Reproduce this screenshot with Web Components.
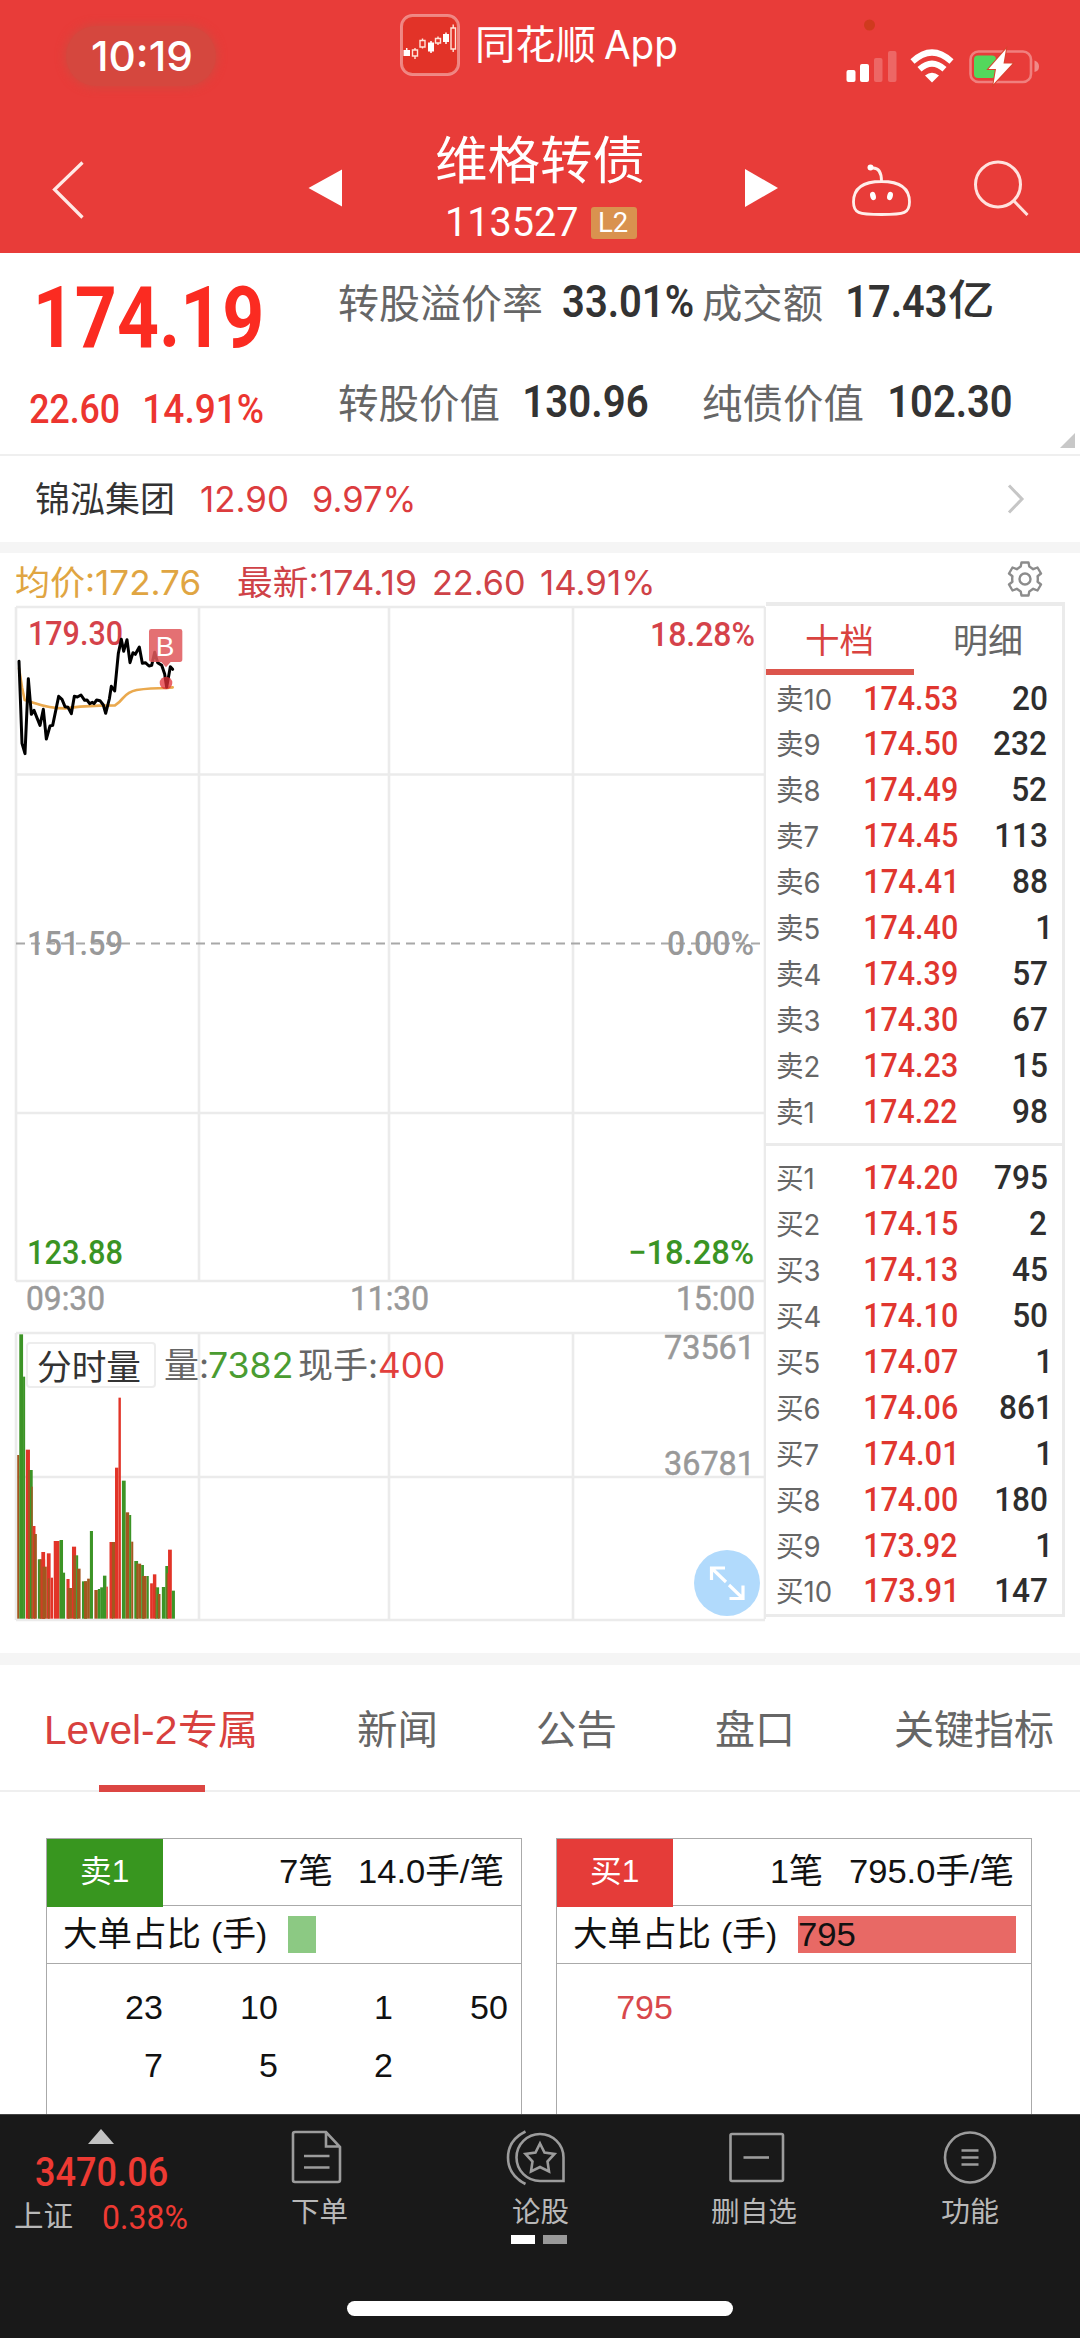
<!DOCTYPE html>
<html lang="zh-CN">
<head>
<meta charset="utf-8">
<title>维格转债 113527</title>
<style>
html,body{margin:0;padding:0;background:#fff}
body{width:1080px;height:2338px;overflow:hidden;font-family:"Liberation Sans","Noto Sans CJK SC",sans-serif}
</style>
</head>
<body>
<quote-app></quote-app>
<script>
const ctx = document.createElement('canvas').getContext('2d');
const FONTS = `
  .din{font-family:Roboto,"Noto Sans CJK SC",sans-serif;font-weight:500}
  .sf{font-family:Inter,"Noto Sans CJK SC",sans-serif}
  .hv{font-family:"Liberation Sans","Noto Sans CJK SC",sans-serif}
  *{box-sizing:border-box}`;

/* Text whose inked width is fixed (w) or scaled by a factor (sx). */
class FitText extends HTMLElement {
  connectedCallback() {
    if (this.shadowRoot) return;
    const root = this.attachShadow({mode: 'open'});
    root.innerHTML = `<style>:host{display:block;flex:none;white-space:pre;line-height:1.2}
      span{display:inline-block;transform-origin:0 50%;vertical-align:top}</style><span><slot></slot></span>`;
    const cs = getComputedStyle(this);
    ctx.font = `${cs.fontWeight} ${cs.fontSize} ${cs.fontFamily}`;
    const m = ctx.measureText(this.textContent);
    const ink = m.actualBoundingBoxLeft + m.actualBoundingBoxRight;
    const w = this.hasAttribute('w') ? +this.getAttribute('w') : ink * +(this.getAttribute('sx') || 1);
    const s = w / ink;
    this.style.width = w + 'px';
    root.querySelector('span').style.transform =
      `translateX(${m.actualBoundingBoxLeft * s}px) scaleX(${s})`;
  }
}
customElements.define('fit-text', FitText);

const define = (name, html) => {
  const tpl = document.createElement('template');
  tpl.innerHTML = html;
  customElements.define(name, class extends HTMLElement {
    connectedCallback() {
      if (!this.shadowRoot) this.attachShadow({mode: 'open'}).append(tpl.content.cloneNode(true));
    }
  });
};

/* ---------- status bar ---------- */
define('status-bar', `<style>${FONTS}
:host{display:flex;align-items:flex-start;height:104px;color:#fff}
.pill{margin:26px 0 0 66px;width:150px;height:60px;border-radius:30px;background:#d5473e;box-shadow:0 0 8px 2px #d5473e;display:flex;align-items:center;padding:2px 0 0 26px}
.app{margin:14px 0 0 184px}
</style>
<div class="pill"><fit-text class="sf" w="99" style="font-size:41px;font-weight:500">10:19</fit-text></div>
<svg class="app" width="60" height="62" viewBox="0 0 60 62"><rect x="1.5" y="1.5" width="57" height="59" rx="11" fill="#e23328" stroke="#fff" stroke-opacity=".4" stroke-width="3"/>
<path d="M3.500 36h6.500v6H3.500zM28 28.500h6v9H28zM43 20h6v8H43z" fill="#fff"/><path d="M6.700 34v2M31 27v2M31 37v2M46 18.500v2M46 28v2" stroke="#fff" stroke-width="1.500"/>
<g fill="none" stroke="#ffe3d8" stroke-width="1.400"><path d="M12.500 36h5v6h-5zM15 34v2M15 42v3M20 26.500h5v6.500h-5zM22.500 24.500v2M22.500 33v1.500M35.500 24.500h5v4.500h-5zM38 22.500v2M38 29v2M51 14h4.500v21h-4.500zM53.200 10.500v3.500M53.200 35v3"/></g></svg>
<fit-text class="sf" w="117" style="font-size:40px;margin:21px 0 0 18px">同花顺</fit-text>
<fit-text class="sf" w="72" style="font-size:39px;margin:22px 0 0 9px">App</fit-text>
<svg style="margin:18px 0 0 169px" width="196" height="70" viewBox="845 18 196 70">
<circle cx="869.500" cy="25" r="5.500" fill="#cf3a1e"/>
<g fill="#fff"><rect x="846.500" y="70" width="9" height="12" rx="2"/><rect x="860" y="64" width="9" height="18" rx="2"/><g opacity=".22"><rect x="874" y="58" width="8.500" height="24" rx="2"/><rect x="888" y="51" width="8.500" height="31" rx="2"/></g></g>
<g fill="none" stroke="#fff" stroke-width="6"><path d="M912.500 61.500Q932 43.500 951.500 61.500"/><path d="M919.500 69.300Q932 58 944.500 69.300"/></g><path d="M925 75.500Q932 70 939 75.500L932 82.500Z" fill="#fff"/>
<rect x="970.500" y="51.500" width="60.500" height="30.500" rx="8" fill="none" stroke="#fff" stroke-opacity=".35" stroke-width="2.600"/>
<path d="M1034.500 60.500Q1039 62 1039 66.500T1034.500 72Z" fill="#fff" opacity=".4"/>
<rect x="974" y="55.500" width="22" height="22.500" rx="4" fill="#54d75c"/>
<path d="M1006 49L988.500 69H996L993.500 84L1012.500 63.500H1003.500Z" fill="#fff" stroke="#d9432f" stroke-width="2" paint-order="stroke"/>
</svg>`);

/* ---------- navigation bar ---------- */
define('nav-bar', `<style>${FONTS}
:host{display:flex;align-items:flex-start;height:149px;color:#fff}
.mid{display:flex;flex-direction:column;margin-left:93px;width:210px}
.code{display:flex;align-items:center;height:34px;margin:15px 0 0 12px}
.l2{width:46px;height:32px;background:#d9924f;border-radius:3px;margin-left:14px;display:flex;align-items:center;justify-content:center}
</style>
<svg style="margin:50px 0 0 50px" width="40" height="70" viewBox="50 154 40 70"><path d="M82.500 162.500L54.500 189.500L82.500 217.500" fill="none" stroke="#ffe9e6" stroke-width="3.200"/></svg>
<svg style="margin:60px 0 0 215px" width="38" height="48" viewBox="305 164 38 48"><path d="M308.500 188L342 169.500V206.500Z" fill="#fff"/></svg>
<div class="mid"><fit-text class="sf" w="207" style="font-size:51px;margin-top:26px">维格转债</fit-text>
<div class="code"><fit-text class="din" w="129" style="font-size:40px;font-weight:400">113527</fit-text><div class="l2"><fit-text class="din" w="28" style="font-size:27px;font-weight:400">L2</fit-text></div></div></div>
<svg style="margin:60px 0 0 96px" width="38" height="48" viewBox="742 164 38 48"><path d="M778 188L745 169V207Z" fill="#fff"/></svg>
<svg style="margin:54px 0 0 70px" width="64" height="62" viewBox="850 158 64 62" fill="none" stroke="#ffeeea" stroke-width="2.800"><path d="M873 168C879 168 881.500 172 881.500 181M853.500 202C853.500 187 864 181.500 881.500 181.500S909.500 187 909.500 202C909.500 213 905 214.500 881.500 214.500S853.500 213 853.500 202Z"/><circle cx="870.500" cy="167.500" r="3" fill="#fff" stroke="none"/><g fill="#fff" stroke="none"><ellipse cx="873" cy="196" rx="2.800" ry="4.200" transform="rotate(-15 873 196)"/><ellipse cx="890" cy="196" rx="2.800" ry="4.200" transform="rotate(15 890 196)"/></g></svg>
<svg style="margin:54px 0 0 56px" width="64" height="64" viewBox="970 158 64 64" fill="none" stroke="#ffe2de" stroke-width="3"><circle cx="998" cy="184.500" r="22.500"/><path d="M1013 200L1027.500 215"/></svg>`);

/* ---------- quote summary ---------- */
define('quote-summary', `<style>${FONTS}
:host{display:flex;height:203px;border-bottom:2px solid #efefef;color:#333}
.l{width:339px;color:#ec352f;padding-left:30px}
.p{display:flex;align-items:center;height:72px;margin-top:29px;padding-left:8px;color:#fb2b21}
.c,.kv{display:flex;align-items:center}
.c{height:50px;margin-top:31px}
.r{width:741px;padding-top:21px;position:relative}
.kv{height:60px}.kv+.kv{margin-top:40px}
.k{font-size:40px;color:#666}
.v{font-size:45px;font-weight:600;margin-bottom:5px}
.tri{position:absolute;right:5px;bottom:6px}
</style>
<div class="l"><div class="p"><fit-text class="din" w="223" style="font-size:85px;font-weight:700">174.19</fit-text></div>
<div class="c"><fit-text class="din" w="89" style="font-size:41px">22.60</fit-text><fit-text class="din" w="118" style="font-size:41px;margin-left:26px">14.91%</fit-text></div></div>
<div class="r"><div class="kv"><fit-text class="k sf" w="202">转股溢价率</fit-text><fit-text class="v din" w="130" style="margin-left:22px;font-weight:600">33.01%</fit-text><fit-text class="k sf" w="119" style="margin-left:10px">成交额</fit-text><fit-text class="v din" w="98" style="margin-left:26px;font-weight:600">17.43</fit-text><fit-text class="v din" w="43" style="margin-left:3px;font-weight:500;font-size:42px">亿</fit-text></div>
<div class="kv"><fit-text class="k sf" w="160">转股价值</fit-text><fit-text class="v din" w="123" style="margin-left:26px;font-weight:600">130.96</fit-text><fit-text class="k sf" w="160" style="margin-left:55px">纯债价值</fit-text><fit-text class="v din" w="121" style="margin-left:27px;font-weight:600">102.30</fit-text></div>
<svg class="tri" width="15" height="15"><path d="M15 0V15H0Z" fill="#c8c8c8"/></svg></div>`);

define('stock-link', `<style>${FONTS}
:host{display:flex;align-items:center;height:86px;padding-left:36px;font-size:35px;color:#333}
svg{margin-left:auto;margin-right:54px}
</style><fit-text class="sf" w="137">锦泓集团</fit-text><fit-text class="sf" w="86" style="margin-left:28px;color:#dc3c3e">12.90</fit-text><fit-text class="sf" w="99" style="margin-left:27px;color:#dc3c3e">9.97%</fit-text>
<svg width="20" height="32"><path d="M3 2.500L16 16L3 29.500" fill="none" stroke="#c6c6c6" stroke-width="3"/></svg>`);

define('chart-legend', `<style>${FONTS}
:host{display:flex;align-items:center;height:50px;padding:11px 0 0 16px;font-size:34px;color:#cf4247}
svg{margin-left:auto;margin-right:36px;margin-bottom:9px}
</style><fit-text class="sf" w="184" style="color:#e0a542">均价:172.76</fit-text><fit-text class="sf" w="178" style="margin-left:38px">最新:174.19</fit-text><fit-text class="sf" w="90" style="margin-left:18px">22.60</fit-text><fit-text class="sf" w="111" style="margin-left:17px">14.91%</fit-text>
<svg width="38" height="38" viewBox="-19 -19 38 38" fill="none" stroke="#8c8c8c" stroke-width="2.400" stroke-linejoin="round"><circle r="5.500"/><path d="M-3.500-16.500H3.500L4.300-12.500Q6-11.500 8.200-9.800L12.500-11.500L16-5.500L12.600-2.700Q13 0 12.600 2.700L16 5.500L12.500 11.500L8.200 9.800Q6 11.500 4.300 12.500L3.500 16.500H-3.500L-4.300 12.500Q-6 11.500-8.200 9.800L-12.500 11.500L-16 5.500L-12.600 2.700Q-13 0-12.600-2.700L-16-5.500L-12.500-11.500L-8.200-9.800Q-6-11.500-4.300-12.500Z"/></svg>`);

/* ---------- intraday chart ---------- */
const R = '#e23428', G = '#3c9426', B = '#a3571f';
const vol = [[50,6,705,B],[56,11,343,G],[67,6,470,G],[75,12,689,R],[81,6,750,B],[87,8,750,G],[91,4,800,B],[95,8,918,R],[98,9,942,B],[110,10,1018,G],[115,16,1018,B],[120,11,996,R],[123,13,1040,B],[136,11,1000,R],[147,7,1073,R],[139,5,1075,B],[156,17,963,R],[173,10,960,G],[183,6,1058,G],[193,9,1077,R],[196,13,1104,B],[209,12,980,R],[213,8,1006,B],[221,6,1006,G],[224,10,1046,B],[238,15,1084,G],[244,9,1084,B],[253,8,1076,B],[261,9,933,G],[274,10,1110,B],[284,7,1107,G],[291,8,1102,G],[299,10,1067,G],[309,4,1100,R],[318,10,966,R],[325,9,966,B],[334,10,743,R],[344,7,533,R],[354,11,782,G],[365,10,877,B],[375,6,885,G],[381,6,965,B],[390,11,1023,G],[396,5,1031,B],[401,9,1031,B],[410,8,1035,G],[413,7,1068,B],[418,8,1068,B],[426,6,1068,G],[436,8,1090,R],[444,10,1063,R],[450,5,1102,B],[454,8,1102,G],[458,8,1122,B],[470,10,1101,G],[480,8,1038,G],[484,5,1060,B],[488,11,989,R],[499,9,1112,G]];
const bars = vol.map(([x, w, y, c]) => `<rect x="${x}" y="${y}" width="${w}" height="${1196 - y}" fill="${c}"/>`).join('');
define('trend-chart', `<style>${FONTS}
:host{display:block;position:relative;width:766px;height:1050px;flex:none}
svg{display:block}
.din{font-size:34px}
.tools{position:absolute;left:26px;top:739px;height:46px;display:flex;align-items:center;font-size:35px}
.chip{width:130px;height:46px;background:#fff;border:2px solid #ededed;border-radius:4px;display:flex;align-items:center;padding:3px 0 0 10px;color:#333}
</style>
<svg width="766" height="1050" viewBox="0 603 766 1050">
<g fill="none" stroke="#ebebeb" stroke-width="2.600"><path d="M16 607H765M16 774.500H765M16 1113H765M16 1281H765M16 607V1281M199 607V1281M389 607V1281M573 607V1281M765 607V1619"/>
<path d="M16 1333H765M16 1477H765M16 1620H765M16 1333V1620M199 1333V1620M389 1333V1620M573 1333V1620"/></g>
<path d="M16 943.500H765" stroke="#a8a8a8" stroke-width="1.800" stroke-dasharray="9 6"/>
<g class="din" fill="#d5424a">
<text x="28" y="645" textLength="95" lengthAdjust="spacingAndGlyphs">179.30</text>
<text x="650" y="645.500" textLength="105" lengthAdjust="spacingAndGlyphs">18.28%</text></g>
<g class="din" fill="#999">
<text x="27" y="955" textLength="96" lengthAdjust="spacingAndGlyphs">151.59</text>
<text x="667" y="955" textLength="87" lengthAdjust="spacingAndGlyphs">0.00%</text>
<g style="font-weight:400" stroke="#999" stroke-width=".5"><text x="26" y="1310" textLength="79" lengthAdjust="spacingAndGlyphs">09:30</text>
<text x="350" y="1310" textLength="79" lengthAdjust="spacingAndGlyphs">11:30</text>
<text x="676" y="1310" textLength="79" lengthAdjust="spacingAndGlyphs">15:00</text>
<text x="664" y="1359" textLength="91" lengthAdjust="spacingAndGlyphs">73561</text>
<text x="664" y="1475" textLength="91" lengthAdjust="spacingAndGlyphs">36781</text></g></g>
<g class="din" fill="#3a9424"><text x="27" y="1264" textLength="96" lengthAdjust="spacingAndGlyphs">123.88</text>
<text x="628" y="1264" textLength="126" lengthAdjust="spacingAndGlyphs">−18.28%</text></g>
<g transform="translate(0 600) scale(.33333)" fill="none" stroke-linejoin="round" stroke-linecap="round">
<path d="M57 205L66 262L74 300L100 308Q150 325 195 325L240 320L300 317L345 316Q358 308 368 295Q385 275 410 270Q450 264 500 264L518 262" stroke="#eaa94e" stroke-width="8"/>
<path d="M57 184L66 430L75 461L85 236L94 343L102 331L120 376L130 328L139 417L150 378L158 376L176 289L186 298L195 320L204 322L214 341L223 289L232 291L243 285L254 301L261 300L269 311L277 307L282 311L290 300L300 302L310 315L317 340L328 297L334 259L344 273L355 160L364 118L371 154L381 119L390 188L399 158L406 163L418 141L427 190L436 188L447 198L455 196L464 157L473 188L485 196L494 222L500 262L511 200L518 208" stroke="#000" stroke-width="9"/>
<g stroke="none"><circle cx="498" cy="249" r="19" fill="#e33037" opacity=".75"/><path d="M454 87H540Q547 87 547 94V178Q547 186 540 186H512L498 202L484 186H454Q447 186 447 178V94Q447 87 454 87Z" fill="#e0595c" opacity=".86"/></g></g>
<text x="165" y="655.500" text-anchor="middle" fill="#fff" font-family="Liberation Sans" font-size="28">B</text>
<g transform="translate(0 1220) scale(.34436 .33333)">${bars}</g>
<circle cx="727" cy="1583" r="33" fill="#b1dafc"/>
<path d="M711.500 1580V1568H725M712 1568.500L726 1582M729 1585L743 1598.500M729.500 1598.500H743V1585.500" fill="none" stroke="#fff" stroke-width="3.200"/>
</svg>
<div class="tools"><div class="chip"><fit-text class="sf" w="102">分时量</fit-text></div>
<fit-text class="sf" w="42" style="margin-left:9px;color:#666">量:</fit-text><fit-text class="sf" w="82" style="margin-left:2px;color:#4a9c31">7382</fit-text><fit-text class="sf" w="77" style="margin-left:8px;color:#666">现手:</fit-text><fit-text class="sf" w="63" style="margin-left:4px;color:#e23f3c">400</fit-text></div>`);

/* ---------- order book ---------- */
define('book-row', `<style>${FONTS}
:host{display:grid;grid-template-columns:88px 92px 1fr;height:45.900px;align-items:center;padding:0 15px 0 11px}
</style><slot></slot>`);
const asks = [['174.53',20],['174.50',232],['174.49',52],['174.45',113],['174.41',88],['174.40',1],['174.39',57],['174.30',67],['174.23',15],['174.22',98]];
const bids = [['174.20',795],['174.15',2],['174.13',45],['174.10',50],['174.07',1],['174.06',861],['174.01',1],['174.00',180],['173.92',1],['173.91',147]];
const row = (n, [p, q]) => `<book-row><fit-text class="sf n" sx=".95">${n}</fit-text><fit-text class="din p" w="${/1$/.test(p) ? 89 : 92}">${p}</fit-text><fit-text class="din q" sx=".93">${q}</fit-text></book-row>`;
define('order-book', `<style>${FONTS}
:host{display:block;width:299px;height:1015px;margin-top:-1px;border:3px solid #ebebeb;border-top-width:4px;border-left:0}
.tabs{display:flex;height:69px;font-size:34px;color:#666}
.tabs div{width:148px;display:flex;align-items:center;justify-content:center;padding-top:2px}
.tabs .on{color:#d9433f;border-bottom:6px solid #dc554c;padding:8px 2px 0 0}
.n{font-size:29px;color:#666;margin-top:4px}
.p{font-size:34px;color:#e0362f}
.q{font-size:34px;color:#2e2e2e;justify-self:end}
.sep{height:3px;background:#ebebeb;margin:9px 0 9px}
</style><div class="tabs"><div class="on"><fit-text class="sf" w="66">十档</fit-text></div><div><fit-text class="sf" w="66">明细</fit-text></div></div>
${asks.map((r, i) => row('卖' + (10 - i), r)).join('')}<div class="sep"></div>${bids.map((r, i) => row('买' + (i + 1), r)).join('')}`);

/* ---------- section tabs ---------- */
define('section-tabs', `<style>${FONTS}
:host{display:flex;align-items:stretch;height:127px;border-bottom:2px solid #efefef;padding-left:47px;font-size:40px;color:#666}
.t{display:flex;align-items:center;padding-top:4px}
.on{color:#d8403e;position:relative}
.on i{position:absolute;left:52px;bottom:-2px;width:106px;height:7px;background:#dc4643}
</style><div class="t on"><fit-text class="hv" w="129">Level-2</fit-text><fit-text class="hv" w="75" style="margin-left:4px">专属</fit-text><i></i></div>
<div class="t" style="margin-left:103px"><fit-text class="hv" w="77">新闻</fit-text></div>
<div class="t" style="margin-left:103px"><fit-text class="hv" w="77">公告</fit-text></div>
<div class="t" style="margin-left:101px"><fit-text class="hv" w="75">盘口</fit-text></div>
<div class="t" style="margin-left:104px"><fit-text class="hv" w="158">关键指标</fit-text></div>`);

/* ---------- level-2 queue card ---------- */
class QueueCard extends HTMLElement {
  connectedCallback() {
    if (this.shadowRoot) return;
    const a = n => this.getAttribute(n) || '';
    this.attachShadow({mode: 'open'}).innerHTML = `<style>${FONTS}
:host{display:block;width:476px;height:277px;border:1.500px solid #aaa;border-bottom:0;font-size:34px;color:#111}
.h,.b{display:flex;align-items:center;border-bottom:1.500px solid #aaa}
.h{height:67px;padding-right:18px}
.tag{width:116px;height:68px;margin-top:1px;background:${a('color')};color:#fff;font-size:31px;display:flex;align-items:center;justify-content:center;padding:0 2px 1px 0}
.cnt{margin-left:auto}.avg{margin-left:28px}
.h>fit-text{margin-bottom:1px}
.b{height:58px;padding-left:17px}
.bar{margin-left:22px;height:37px;background:${a('fill')};display:flex;align-items:center;padding-left:1px}
.g{display:grid;grid-template-columns:repeat(4,115px);grid-auto-rows:58px;padding-top:14px;justify-items:end;align-items:center}
</style><div class="h"><div class="tag"><fit-text class="hv" w="47">${a('tag')}</fit-text></div>
<fit-text class="hv cnt" w="${a('cw')}">${a('count')}</fit-text><fit-text class="hv avg" w="${a('aw')}">${a('avg')}</fit-text></div>
<div class="b"><fit-text class="hv" w="136">大单占比</fit-text><fit-text class="hv" w="53" style="margin-left:13px">(手)</fit-text><div class="bar" style="width:${a('bar')}px">${a('big') ? `<fit-text class="hv" w="56">${a('big')}</fit-text>` : ''}</div></div>
<div class="g" style="color:${a('ink')}">${a('items').split(',').map(v => `<fit-text class="hv">${v}</fit-text>`).join('')}</div>`;
  }
}
customElements.define('queue-card', QueueCard);

/* ---------- bottom bar ---------- */
define('bottom-bar', `<style>${FONTS}
:host{display:block;height:224px;background:#191919;color:#b8b8b8;border-top:1px solid #444}
.row{display:flex;height:130px;font-size:28px}
.idx{width:204px;color:#ee3a33;padding-top:14px}
.idx svg{display:block;margin-left:88px}
.idx .pt{margin:4px 0 0 36px;font-size:41px}
.idx .ch{display:flex;align-items:center;margin-left:15px;height:34px;margin-top:3px}
.it{display:flex;flex-direction:column;align-items:center;padding-top:12px}
.it fit-text{margin-top:9px}
svg{fill:none;stroke:#9c9c9c;stroke-width:2.600}
.dots{display:flex;gap:8px;margin:5px 4px 0 0}.dots i{width:24px;height:9px;background:#fff}.dots i+i{background:#999}
.home{width:386px;height:15px;border-radius:8px;background:#fff;margin:56px 0 0 347px}
</style><div class="row"><div class="idx"><svg width="26" height="15"><path d="M13 0L26 15H0Z" fill="#c2c2c2" stroke="none"/></svg><fit-text class="din pt" w="131">3470.06</fit-text>
<div class="ch"><fit-text class="sf" w="57" style="color:#b8b8b8;font-size:29px">上证</fit-text><fit-text class="din" w="84" style="margin-left:31px;font-size:34px;font-weight:400">0.38%</fit-text></div></div>
<div class="it" style="width:231px"><svg style="margin-right:5px" width="56" height="60" viewBox="289 2127 56 60"><path d="M295 2132H326L340 2147V2180Q340 2182 338 2182H295Q293 2182 293 2180V2134Q293 2132 295 2132ZM326 2133V2146.500H340M304 2156H329.500M304 2167.500H329.500"/></svg><fit-text class="sf" w="55">下单</fit-text></div>
<div class="it" style="width:211px"><svg style="margin-right:5px" width="64" height="60" viewBox="507 2127 64 60"><path d="M526.500 2131.500Q509 2140 509 2157.500T526.500 2184"/><path d="M564.500 2181H541A23.500 23.500 0 1 1 564.500 2157.500Z"/><path d="M541 2143.500L545.500 2152.500L555.500 2154L548.500 2161.500L550 2171.500L541 2167L532 2171.500L533.500 2161.500L526.500 2154L536.500 2152.500Z"/></svg><fit-text class="sf" w="56">论股</fit-text><div class="dots"><i></i><i></i></div></div>
<div class="it" style="width:216px"><svg style="margin-left:5px" width="64" height="60" viewBox="725 2127 64 60"><rect x="730.500" y="2134" width="52.500" height="47" rx="1.500"/><path d="M743.500 2157.500H769"/></svg><fit-text class="sf" w="85">删自选</fit-text></div>
<div class="it" style="width:216px"><svg width="60" height="60" viewBox="940.500 2127 60 60"><circle cx="970.500" cy="2157.500" r="25"/><path d="M962 2150.500H979M962 2157.500H979M962 2164.500H979"/></svg><fit-text class="sf" w="56">功能</fit-text></div></div>
<div class="home"></div>`);

define('quote-app', `<style>${FONTS}
:host{display:flex;flex-direction:column;width:1080px;height:2338px;background:#fff}
header{background:#e83c39;height:253px}
.band{background:#f5f5f5;flex:none}
.chart{display:flex;height:1050px}
.cards{display:flex;gap:34px;height:322px;padding:46px 0 0 46px;overflow:hidden}
</style>
<header><status-bar></status-bar><nav-bar></nav-bar></header>
<quote-summary></quote-summary>
<stock-link></stock-link>
<div class="band" style="height:11px"></div>
<chart-legend></chart-legend>
<div class="chart"><trend-chart></trend-chart><order-book></order-book></div>
<div class="band" style="height:12px"></div>
<section-tabs></section-tabs>
<div class="cards">
<queue-card tag="卖1" color="#38961f" fill="#8cc983" count="7笔" cw="52" avg="14.0手/笔" aw="143" bar="28" items="23,10,1,50,7,5,2" ink="#111"></queue-card>
<queue-card tag="买1" color="#e53c39" fill="#e86965" count="1笔" cw="50" avg="795.0手/笔" aw="163" bar="218" big="795" items="795" ink="#d8484c"></queue-card>
</div>
<bottom-bar></bottom-bar>`);
</script>
</body>
</html>
